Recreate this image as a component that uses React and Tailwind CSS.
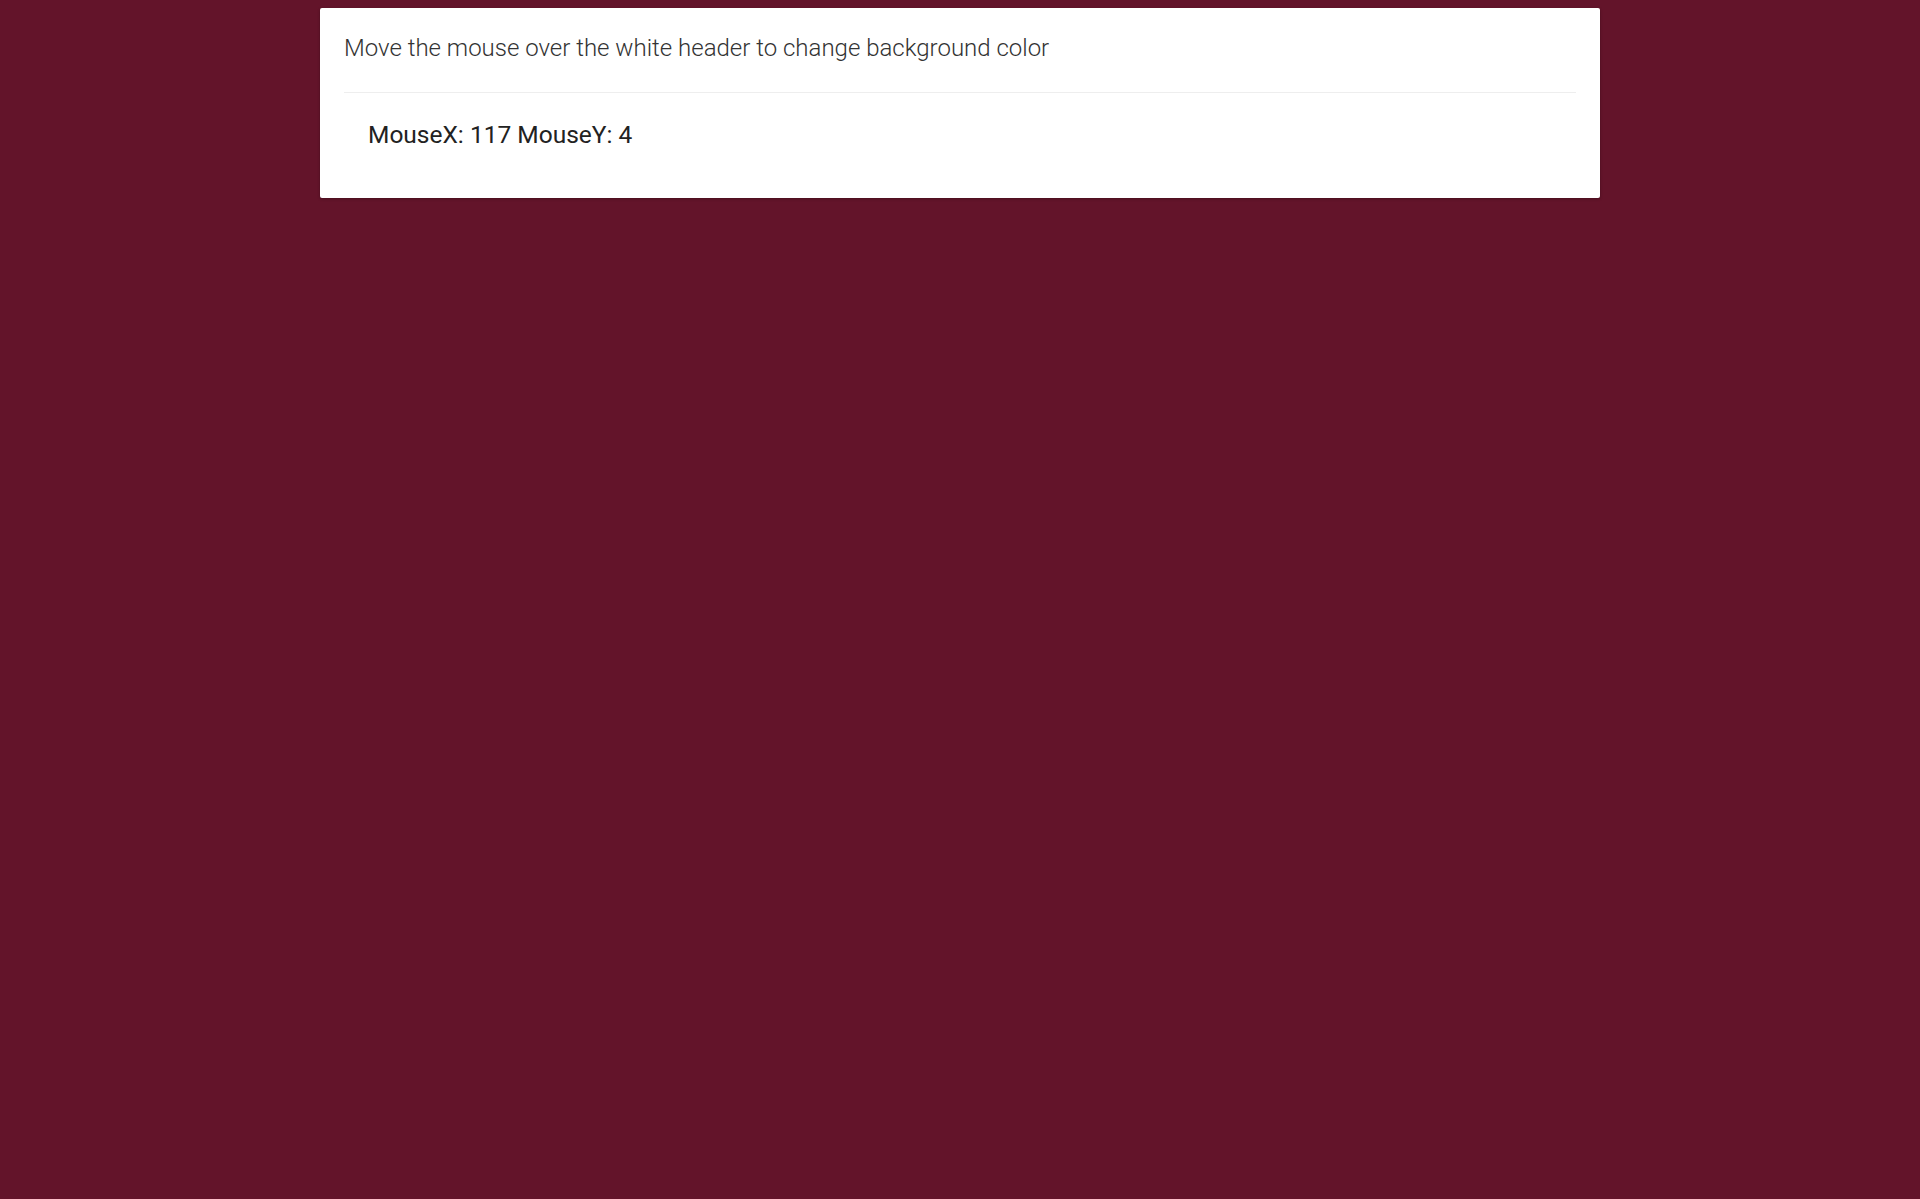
import { useState } from "react";

export default function App() {
  const [pos, setPos] = useState({ x: 117, y: 4 });

  return (
    <div className="min-h-screen bg-[#63142a] pt-2" style={{ fontFamily: "Roboto, 'Liberation Sans', sans-serif" }}>
      <div
        className="mx-auto w-[1280px] bg-white rounded-[2px] shadow-[0_1px_3px_rgba(0,0,0,0.3)] px-6 pt-[22px] pb-[23px]"
        onMouseMove={(e) => {
          const r = e.currentTarget.getBoundingClientRect();
          setPos({ x: Math.round(e.clientX - r.left), y: Math.round(e.clientY - r.top) });
        }}
      >
        <p className="text-[24px] leading-[36px] font-light text-[#333]">
          Move the mouse over the white header to change background color
        </p>
        <div className="mt-[26px] border-t border-[#eeeeee]" />
        <div className="px-6 pt-[24px] pb-[22px]">
          <span className="text-[24.5px] leading-[36px] text-[#222]">
            MouseX: {pos.x} MouseY: {pos.y}
          </span>
        </div>
      </div>
    </div>
  );
}
